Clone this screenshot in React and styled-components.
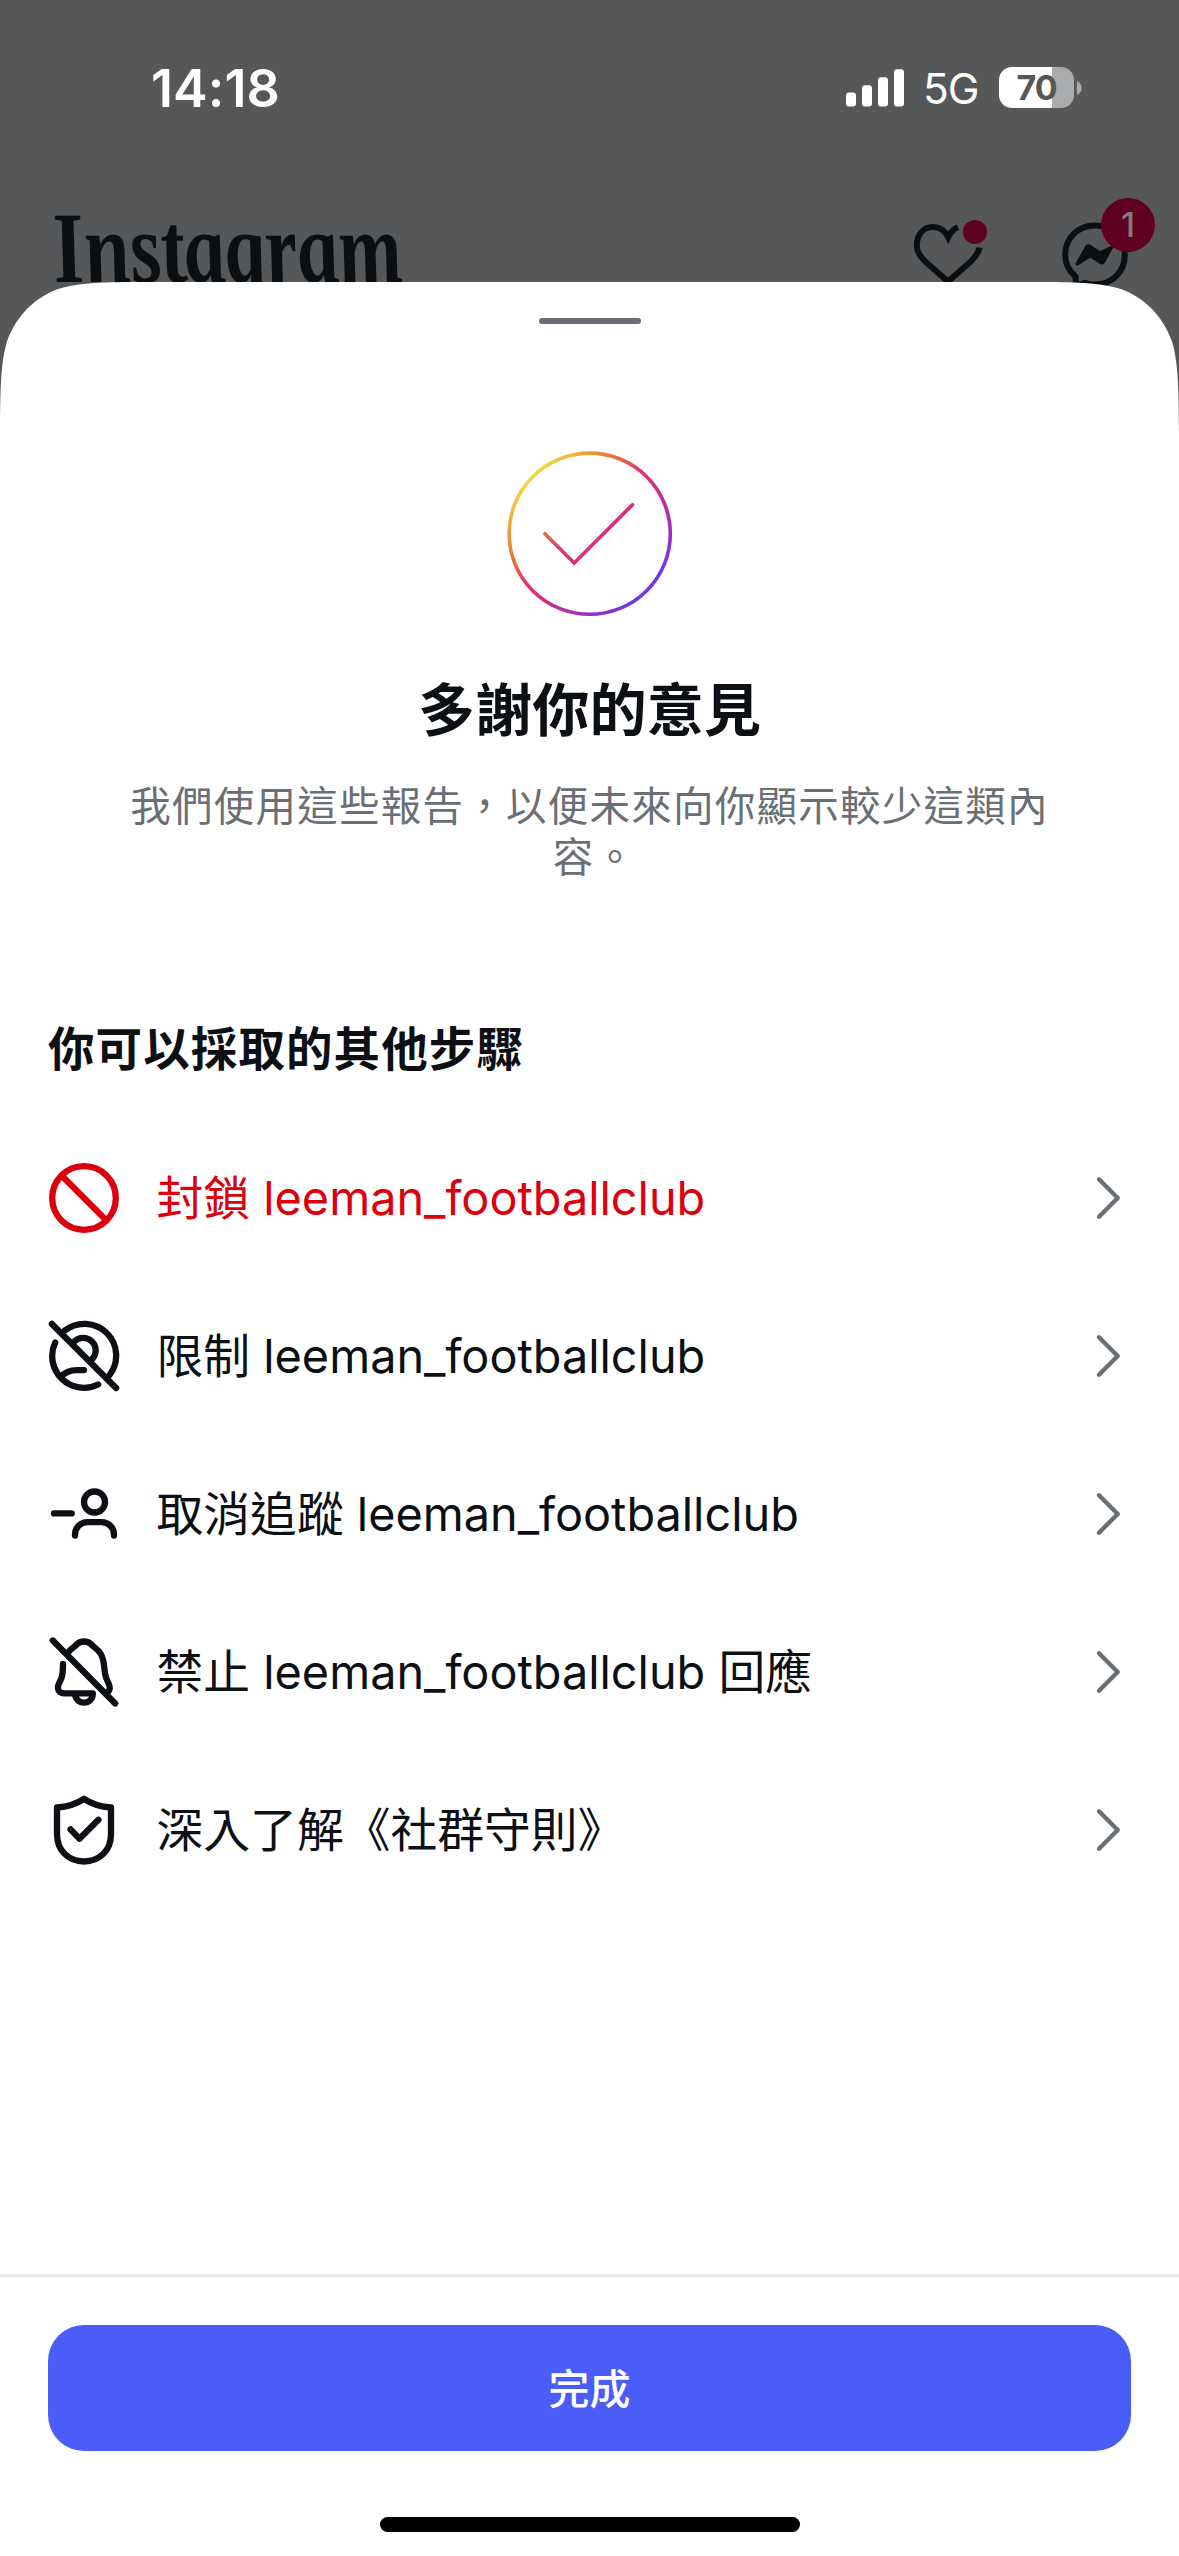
import React from 'react'
import styled, { createGlobalStyle } from 'styled-components';

const USER = 'leeman_footballclub';

const App = () => {
  const steps = [
    { id: 'block', icon: <BlockIcon/>, label: `封鎖 ${USER}`, danger: true },
    { id: 'restrict', icon: <RestrictIcon/>, label: `限制 ${USER}` },
    { id: 'unfollow', icon: <UnfollowIcon/>, label: `取消追蹤 ${USER}` },
    { id: 'mute', icon: <MuteIcon/>, label: `禁止 ${USER} 回應` },
    { id: 'guide', icon: <ShieldIcon/>, label: '深入了解《社群守則》' },
  ];

  return (
    <Screen>
      <GlobalStyle/>
      <StatusBar>
        <Clock>14:18</Clock>
        <StatusRight>
          <SignalIcon/>
          <Network>5G</Network>
          <Battery/>
        </StatusRight>
      </StatusBar>
      <FeedHeader>
        <Wordmark>Instagram</Wordmark>
        <HeaderActions>
          <ActionBox>
            <HeartIcon/>
            <Dot/>
          </ActionBox>
          <ActionBox>
            <MessengerIcon/>
            <Badge>1</Badge>
          </ActionBox>
        </HeaderActions>
      </FeedHeader>
      <Sheet>
        <Handle/>
        <Hero>
          <CheckIcon/>
          <Title>多謝你的意見</Title>
          <Description>我們使用這些報告，以便未來向你顯示較少這類內容。</Description>
        </Hero>
        <SectionTitle>你可以採取的其他步驟</SectionTitle>
        <StepList>
          {steps.map((step)=>(
            <Step key={step.id} $danger={step.danger}>
              {step.icon}
              <StepLabel>{step.label}</StepLabel>
              <ChevronIcon/>
            </Step>
          ))}
        </StepList>
        <Footer>
          <DoneButton>完成</DoneButton>
          <HomeIndicator/>
        </Footer>
      </Sheet>
    </Screen>
  )
}

const SignalIcon = () => (
  <svg width="58" height="38" viewBox="0 0 58 38" fill="#fff">
    <rect x="0" y="23.5" width="10" height="14" rx="3"/>
    <rect x="16" y="16.2" width="10" height="21.3" rx="3"/>
    <rect x="32" y="8.2" width="10" height="29.3" rx="3"/>
    <rect x="48" y="0.2" width="10" height="37.3" rx="3"/>
  </svg>
)

const Battery = () => (
  <BatteryWrap>
    <BatteryBody>70</BatteryBody>
    <svg width="5" height="14" viewBox="0 0 5 14" fill="#aaabac">
      <path d="M0 0C3 1.5 4.6 4 4.6 7S3 12.5 0 14Z"/>
    </svg>
  </BatteryWrap>
)

const HeartIcon = () => (
  <svg width="72" height="72" viewBox="0 0 72 72" fill="none" stroke="#0b0f12" strokeWidth="6">
    <path d="M46 8.2C41.500 10 38.500 13 36.200 18.200C33.500 12.500 28 8 20.500 8C11.500 8 4.800 15.500 4.800 26.500C4.800 33 8.200 38 14 43.300L36 62.500L58 43.300C63.500 38 66.600 33.500 67.600 28.500"/>
  </svg>
)

const MessengerIcon = () => (
  <svg width="72" height="72" viewBox="0 0 72 72">
    <path d="M36 6.500C19 6.500 6.200 19 6.200 36C6.200 45 10 52 16.500 57.500L17 66.500L26 63.800C29 64.900 32.500 65.500 36 65.500C53 65.500 65.800 53 65.800 36C65.800 19 53 6.500 36 6.500Z" fill="none" stroke="#0b0f12" strokeWidth="6"/>
    <path d="M16.500 44.500L26.500 26.600Q28.300 24.400 31 25.600L41 32L53 26.500Q55 26.500 54.300 28.500L46 43.500Q44 46.600 41 45L31.500 38.700L19 46.300Q16 47 16.500 44.500Z" fill="#0b0f12"/>
  </svg>
)

const CheckIcon = () => (
  <svg width="166" height="166" viewBox="0 0 166 166" fill="none" stroke="url(#brand)" strokeWidth="3.6">
    <defs>
      <linearGradient id="brand" gradientUnits="userSpaceOnUse" x1="25.500" y1="25.500" x2="140.500" y2="140.500">
        <stop offset="0" stopColor="#f3d648"/>
        <stop offset="0.14" stopColor="#eb9a38"/>
        <stop offset="0.32" stopColor="#e56440"/>
        <stop offset="0.42" stopColor="#e53a6a"/>
        <stop offset="0.58" stopColor="#d22d80"/>
        <stop offset="0.7" stopColor="#c02ba4"/>
        <stop offset="0.85" stopColor="#9c2cc6"/>
        <stop offset="1" stopColor="#7038e6"/>
      </linearGradient>
    </defs>
    <circle cx="82.700" cy="82.700" r="80.600"/>
    <path d="M37.900 82.700L67.200 112L125.500 53.700" strokeLinecap="round"/>
  </svg>
)

// row icons share a 24 unit grid with the origin in the middle
const RowIcon = ({ children }) => (
  <svg width="72" height="72" viewBox="-12 -12 24 24" fill="none" stroke="currentColor" strokeWidth="2.1" strokeLinecap="round" strokeLinejoin="round">
    {children}
  </svg>
)

const BlockIcon = () => (
  <RowIcon>
    <circle r="10.600"/>
    <path d="M-7.400 -7.400L7.400 7.400"/>
  </RowIcon>
)

const RestrictIcon = () => (
  <RowIcon>
    <path d="M-10.700 -10.700L10.700 10.700"/>
    <path d="M-6.500 -8.400A10.600 10.600 0 0 1 8.400 6.500"/>
    <path d="M-9.600 -4.500A10.600 10.600 0 0 0 4.700 9.500"/>
    <path d="M-3.300 -4.800A4.200 4.200 0 1 1 2.700 1.100"/>
    <path d="M0 4.700H-2.200C-4.600 4.700 -6.500 5.500 -7.700 7"/>
  </RowIcon>
)

const UnfollowIcon = () => (
  <RowIcon>
    <path d="M-10 -0.200H-4.100"/>
    <circle cx="3.500" cy="-4" r="3.500"/>
    <path d="M-3 7.200V6.800A4.100 4.100 0 0 1 1.100 2.700H5.900A4.100 4.100 0 0 1 10 6.800V7.200"/>
  </RowIcon>
)

const MuteIcon = () => (
  <RowIcon>
    <path d="M-10.400 -10.500L10.400 10.500"/>
    <path d="M-5.200 -6.600C-4.300 -7.900 -3.200 -8.300 -2.400 -9.200C-1.200 -10.500 1.200 -10.500 2.400 -9.200C3.300 -8.200 4.700 -7.600 5.600 -6C7.100 -3.400 6.500 -0.500 7.400 2C7.900 3.400 8.700 4.200 8.600 5.500Q8.500 6.300 7.700 6.900"/>
    <path d="M-7 -2.700C-7 -0.800 -7 0.500 -7.500 2C-8 3.400 -8.800 4 -8.700 5.400C-8.600 6.500 -7.700 7.100 -6.600 7.100H2.900"/>
    <path d="M-2.900 7.500A2.900 2.700 0 0 0 2.900 7.500"/>
  </RowIcon>
)

const ShieldIcon = () => (
  <RowIcon>
    <path d="M0 -10.400C-2.500 -8.700 -5.200 -7.800 -9 -7.500V1.300C-9 7 -5 10.500 0 10.500S9 7 9 1.300V-7.500C5.200 -7.800 2.500 -8.700 0 -10.400Z"/>
    <path d="M-4.500 -0.200L-1.500 2.900L4.800 -3.400"/>
  </RowIcon>
)

const ChevronIcon = () => (
  <svg width="28" height="44" viewBox="0 0 28 44" fill="none" stroke="#6a6f75" strokeWidth="4.4" strokeLinecap="round" strokeLinejoin="round">
    <path d="M4 3.300L22.700 22L4 40.700"/>
  </svg>
)

const GlobalStyle = createGlobalStyle`
  body {
    margin: 0;
    background: #565759;
    font-family: Inter, 'Noto Sans CJK TC', sans-serif;
  }
`

const Screen = styled.div`
  width: 1179px;
  height: 2556px;
  display: flex;
  flex-direction: column;
  overflow: hidden;
  background: #565759;
`

const StatusBar = styled.header`
  height: 177px;
  flex: none;
  box-sizing: border-box;
  padding: 57px 97px 0 151px;
  display: flex;
  justify-content: space-between;
  align-items: flex-start;
  color: #ffffff;
`

const Clock = styled.div`
  font-size: 52px;
  font-weight: 600;
  line-height: 63px;
  letter-spacing: 0.1px;
`

const StatusRight = styled.div`
  display: flex;
  align-items: center;
  height: 61px;
`

const Network = styled.div`
  width: 56px;
  margin: 3px 20px 0 19px;
  font-size: 42.500px;
  line-height: 50px;
  letter-spacing: -1px;
  white-space: nowrap;
`

const BatteryWrap = styled.div`
  display: flex;
  align-items: center;
  gap: 3px;
`

const BatteryBody = styled.div`
  width: 75px;
  height: 41px;
  border-radius: 13px;
  background: linear-gradient(to right, #ffffff 53px, #aaabac 53px);
  color: #565759;
  font-size: 34px;
  font-weight: 700;
  line-height: 41px;
  text-align: center;
  letter-spacing: -1px;
`

const FeedHeader = styled.div`
  height: 105px;
  flex: none;
  box-sizing: border-box;
  padding: 27px 48px 0 54px;
  display: flex;
  justify-content: space-between;
`

const Wordmark = styled.div`
  height: 78px;
  margin-top: -8px;
  font-family: 'Liberation Serif', serif;
  font-size: 101px;
  font-style: italic;
  font-weight: 700;
  line-height: 104px;
  color: #0b0f12;
  transform: scaleX(0.808) skewX(12deg);
  transform-origin: 0 85%;
`

const HeaderActions = styled.div`
  display: flex;
  gap: 75px;
  margin-top: 15px;
`

const ActionBox = styled.div`
  position: relative;
  width: 72px;
  height: 72px;
`

const Dot = styled.div`
  position: absolute;
  left: 51px;
  top: 1px;
  width: 24px;
  height: 24px;
  border-radius: 50%;
  background: #5f001e;
`

const Badge = styled.div`
  position: absolute;
  left: 42px;
  top: -21px;
  width: 54px;
  height: 54px;
  border-radius: 50%;
  background: #5f001e;
  color: #857a7e;
  font-size: 34px;
  font-weight: 500;
  line-height: 54px;
  text-align: center;
`

const Sheet = styled.main`
  position: relative;
  flex: 1;
  display: flex;
  flex-direction: column;
  background: #ffffff;
  /* continuous corners, softer than a plain border-radius */
  clip-path: path('M0 2274V150C0.300 110 0.500 82 6.800 60C15.400 35 33.900 16 57.500 7.200C79 0.500 105 0 145 0H1034C1074 0 1100 0.500 1121.500 7.200C1145.100 16 1163.600 35 1172.200 60C1178.500 82 1178.700 110 1179 150V2274Z');
`

const Handle = styled.div`
  width: 102px;
  height: 6px;
  margin: 36px auto 0;
  border-radius: 3px;
  background: #6a6e79;
`

const Hero = styled.section`
  display: flex;
  flex-direction: column;
  align-items: center;
  margin-top: 127px;
`

const Title = styled.h1`
  margin: 54px 0 0;
  font-size: 57.200px;
  font-weight: 700;
  line-height: 80px;
  color: #0c1014;
`

/* the padding and indent balance the trailing full stop on the last line */
const Description = styled.p`
  width: 924px;
  margin: 30px 0 0;
  padding-left: 10px;
  text-indent: -10px;
  font-size: 40.500px;
  line-height: 51px;
  letter-spacing: 1.250px;
  text-align: center;
  color: #6a6f75;
`

const SectionTitle = styled.h2`
  margin: 136px 48px 0;
  font-size: 46.500px;
  font-weight: 700;
  line-height: 60px;
  letter-spacing: 1.100px;
  color: #0c1014;
`

const StepList = styled.ul`
  list-style: none;
  margin: 40px 0 0;
  padding: 0;
`

const Step = styled.li`
  height: 158.100px;
  padding: 0 56px 0 48px;
  display: flex;
  align-items: center;
  color: ${props => props.$danger ? '#dc000d' : '#0c1014'};
`

const StepLabel = styled.span`
  flex: 1;
  margin: -1px 0 0 36.500px;
  font-size: 46.800px;
  line-height: 60px;
  white-space: nowrap;
`

const Footer = styled.footer`
  margin-top: auto;
  height: 282px;
  box-sizing: border-box;
  border-top: 3px solid #e9ebeb;
  padding: 48px 48px 0;
  display: flex;
  flex-direction: column;
  align-items: center;
`

const DoneButton = styled.button`
  width: 100%;
  height: 126px;
  flex: none;
  padding: 0 0 4px;
  border: none;
  border-radius: 36px;
  background: #4a5df9;
  color: #ffffff;
  font-family: inherit;
  font-size: 41px;
  font-weight: 500;
`

const HomeIndicator = styled.div`
  width: 420px;
  height: 15px;
  margin-top: 66px;
  border-radius: 8px;
  background: #000000;
`

export default App
